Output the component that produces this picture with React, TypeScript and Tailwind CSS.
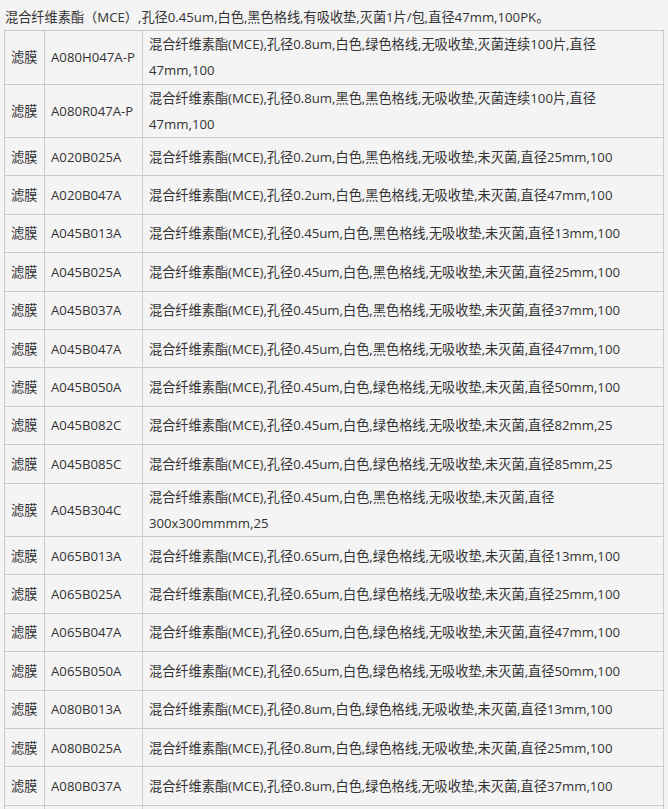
const ROWS: { code: string; desc: string; tail?: string }[] = [
  { code: 'A080H047A-P', desc: '混合纤维素酯(MCE),孔径0.8um,白色,绿色格线,无吸收垫,灭菌连续100片,直径', tail: '47mm,100' },
  { code: 'A080R047A-P', desc: '混合纤维素酯(MCE),孔径0.8um,黑色,黑色格线,无吸收垫,灭菌连续100片,直径', tail: '47mm,100' },
  { code: 'A020B025A', desc: '混合纤维素酯(MCE),孔径0.2um,白色,黑色格线,无吸收垫,未灭菌,直径25mm,100' },
  { code: 'A020B047A', desc: '混合纤维素酯(MCE),孔径0.2um,白色,黑色格线,无吸收垫,未灭菌,直径47mm,100' },
  { code: 'A045B013A', desc: '混合纤维素酯(MCE),孔径0.45um,白色,黑色格线,无吸收垫,未灭菌,直径13mm,100' },
  { code: 'A045B025A', desc: '混合纤维素酯(MCE),孔径0.45um,白色,黑色格线,无吸收垫,未灭菌,直径25mm,100' },
  { code: 'A045B037A', desc: '混合纤维素酯(MCE),孔径0.45um,白色,黑色格线,无吸收垫,未灭菌,直径37mm,100' },
  { code: 'A045B047A', desc: '混合纤维素酯(MCE),孔径0.45um,白色,黑色格线,无吸收垫,未灭菌,直径47mm,100' },
  { code: 'A045B050A', desc: '混合纤维素酯(MCE),孔径0.45um,白色,绿色格线,无吸收垫,未灭菌,直径50mm,100' },
  { code: 'A045B082C', desc: '混合纤维素酯(MCE),孔径0.45um,白色,绿色格线,无吸收垫,未灭菌,直径82mm,25' },
  { code: 'A045B085C', desc: '混合纤维素酯(MCE),孔径0.45um,白色,绿色格线,无吸收垫,未灭菌,直径85mm,25' },
  { code: 'A045B304C', desc: '混合纤维素酯(MCE),孔径0.45um,白色,黑色格线,无吸收垫,未灭菌,直径', tail: '300x300mmmm,25' },
  { code: 'A065B013A', desc: '混合纤维素酯(MCE),孔径0.65um,白色,绿色格线,无吸收垫,未灭菌,直径13mm,100' },
  { code: 'A065B025A', desc: '混合纤维素酯(MCE),孔径0.65um,白色,绿色格线,无吸收垫,未灭菌,直径25mm,100' },
  { code: 'A065B047A', desc: '混合纤维素酯(MCE),孔径0.65um,白色,绿色格线,无吸收垫,未灭菌,直径47mm,100' },
  { code: 'A065B050A', desc: '混合纤维素酯(MCE),孔径0.65um,白色,绿色格线,无吸收垫,未灭菌,直径50mm,100' },
  { code: 'A080B013A', desc: '混合纤维素酯(MCE),孔径0.8um,白色,绿色格线,无吸收垫,未灭菌,直径13mm,100' },
  { code: 'A080B025A', desc: '混合纤维素酯(MCE),孔径0.8um,白色,绿色格线,无吸收垫,未灭菌,直径25mm,100' },
  { code: 'A080B037A', desc: '混合纤维素酯(MCE),孔径0.8um,白色,绿色格线,无吸收垫,未灭菌,直径37mm,100' },
  { code: 'A080B047A', desc: '混合纤维素酯(MCE),孔径0.8um,白色,绿色格线,无吸收垫,未灭菌,直径47mm,100' },
]

const cell = 'border border-[#cccccc] px-[6px] leading-[26px] align-middle whitespace-nowrap overflow-hidden'

export default function App() {
  return (
    <div className="min-h-screen bg-[#f4f4f4] text-[#333] text-[13.2px] font-['Open_Sans','Noto_Sans_CJK_SC',sans-serif]">
      <p className="pl-[5px] pt-[5px] leading-[24px]">
        混合纤维素酯（MCE）,孔径0.45um,白色,黑色格线,有吸收垫,灭菌1片/包,直径47mm,100PK。
      </p>
      <table className="ml-[4px] mt-[1px] w-[660px] border-collapse table-fixed">
        <colgroup>
          <col className="w-[40px]" />
          <col className="w-[98px]" />
          <col />
        </colgroup>
        <tbody>
          {ROWS.map((r) => (
            <tr key={r.code} className={r.tail ? 'h-[53.5px]' : 'h-[38.4px]'}>
              <td className={cell}>滤膜</td>
              <td className={cell}>{r.code}</td>
              <td className={cell}>
                {r.desc}
                {r.tail && (
                  <>
                    <br />
                    {r.tail}
                  </>
                )}
              </td>
            </tr>
          ))}
        </tbody>
      </table>
    </div>
  )
}
